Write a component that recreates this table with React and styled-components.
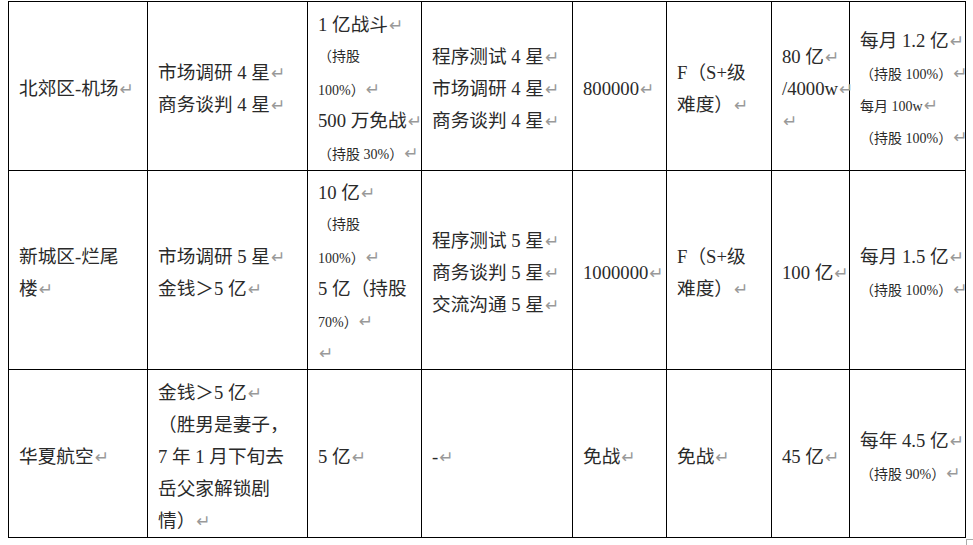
import React from 'react';
import styled, { createGlobalStyle } from 'styled-components';

const Global = createGlobalStyle`
  body {
    margin: 0;
    background: #fff;
  }
`;

const Page = styled.div`
  padding: 1px 0 0 8px;
  width: 973px;
  height: 545px;
  box-sizing: border-box;
  overflow: hidden;
  font-family: "Liberation Serif", "Noto Sans CJK SC", serif;
  color: #2a2a2a;
`;

const Sheet = styled.table`
  border-collapse: collapse;
  table-layout: fixed;
  width: 958px;
`;

const Row = styled.tr`
  height: ${p => p.h}px;
`;

const Cell = styled.td`
  border: 1px solid #000;
  vertical-align: middle;
  padding: 6px 0 0 10px;
  white-space: nowrap;
  overflow: visible;
`;

const Line = styled.div`
  height: 32px;
  line-height: 32px;
  font-size: ${p => (p.small ? '14px' : '18.67px')};
`;

const Mark = styled.span`
  font-family: "DejaVu Sans", sans-serif;
  font-size: 17px;
  color: #999;
  margin-left: 1px;
`;

const Foot = styled.div`
  display: flex;
  justify-content: flex-end;
  width: 965px;
  padding-top: 1px;
`;

const Corner = styled.span`
  width: 6px;
  height: 6px;
  border-left: 1px solid #aaa;
  border-top: 1px solid #aaa;
`;

const widths = [139, 160, 114, 151, 94, 105, 78, 116];

// 每行：[文字, 小字?, 段落标记?]
const L = (t, small = false, mark = true) => ({ t, small, mark });

const rows = [
  {
    h: 169,
    cells: [
      [L('北郊区-机场')],
      [L('市场调研 4 星'), L('商务谈判 4 星')],
      [L('1 亿战斗'), L('（持股', true, false), L('100%）', true), L('500 万免战'), L('（持股 30%）', true)],
      [L('程序测试 4 星'), L('市场调研 4 星'), L('商务谈判 4 星')],
      [L('800000')],
      [L('F（S+级', false, false), L('难度）')],
      [L('80 亿'), L('/4000w'), L('')],
      [L('每月 1.2 亿'), L('（持股 100%）', true), L('每月 100w', true), L('（持股 100%）', true)],
    ],
  },
  {
    h: 199,
    cells: [
      [L('新城区-烂尾', false, false), L('楼')],
      [L('市场调研 5 星'), L('金钱＞5 亿')],
      [L('10 亿'), L('（持股', true, false), L('100%）', true), L('5 亿（持股', false, false), L('70%）', true), L('')],
      [L('程序测试 5 星'), L('商务谈判 5 星'), L('交流沟通 5 星')],
      [L('1000000')],
      [L('F（S+级', false, false), L('难度）')],
      [L('100 亿')],
      [L('每月 1.5 亿'), L('（持股 100%）', true)],
    ],
  },
  {
    h: 168,
    cells: [
      [L('华夏航空')],
      [L('金钱＞5 亿'), L('（胜男是妻子，', false, false), L('7 年 1 月下旬去', false, false), L('岳父家解锁剧', false, false), L('情）')],
      [L('5 亿')],
      [L('-')],
      [L('免战')],
      [L('免战')],
      [L('45 亿')],
      [L('每年 4.5 亿'), L('（持股 90%）', true)],
    ],
  },
];

export default function App() {
  return (
    <Page>
      <Global />
      <Sheet>
        <colgroup>
          {widths.map((w, i) => <col key={i} style={{ width: w }} />)}
        </colgroup>
        <tbody>
          {rows.map((r, ri) => (
            <Row key={ri} h={r.h}>
              {r.cells.map((lines, ci) => (
                <Cell key={ci}>
                  {lines.map((l, li) => (
                    <Line key={li} small={l.small}>
                      {l.t}
                      {l.mark && <Mark>↵</Mark>}
                    </Line>
                  ))}
                </Cell>
              ))}
            </Row>
          ))}
        </tbody>
      </Sheet>
      <Foot>
        <Corner />
      </Foot>
    </Page>
  );
}
